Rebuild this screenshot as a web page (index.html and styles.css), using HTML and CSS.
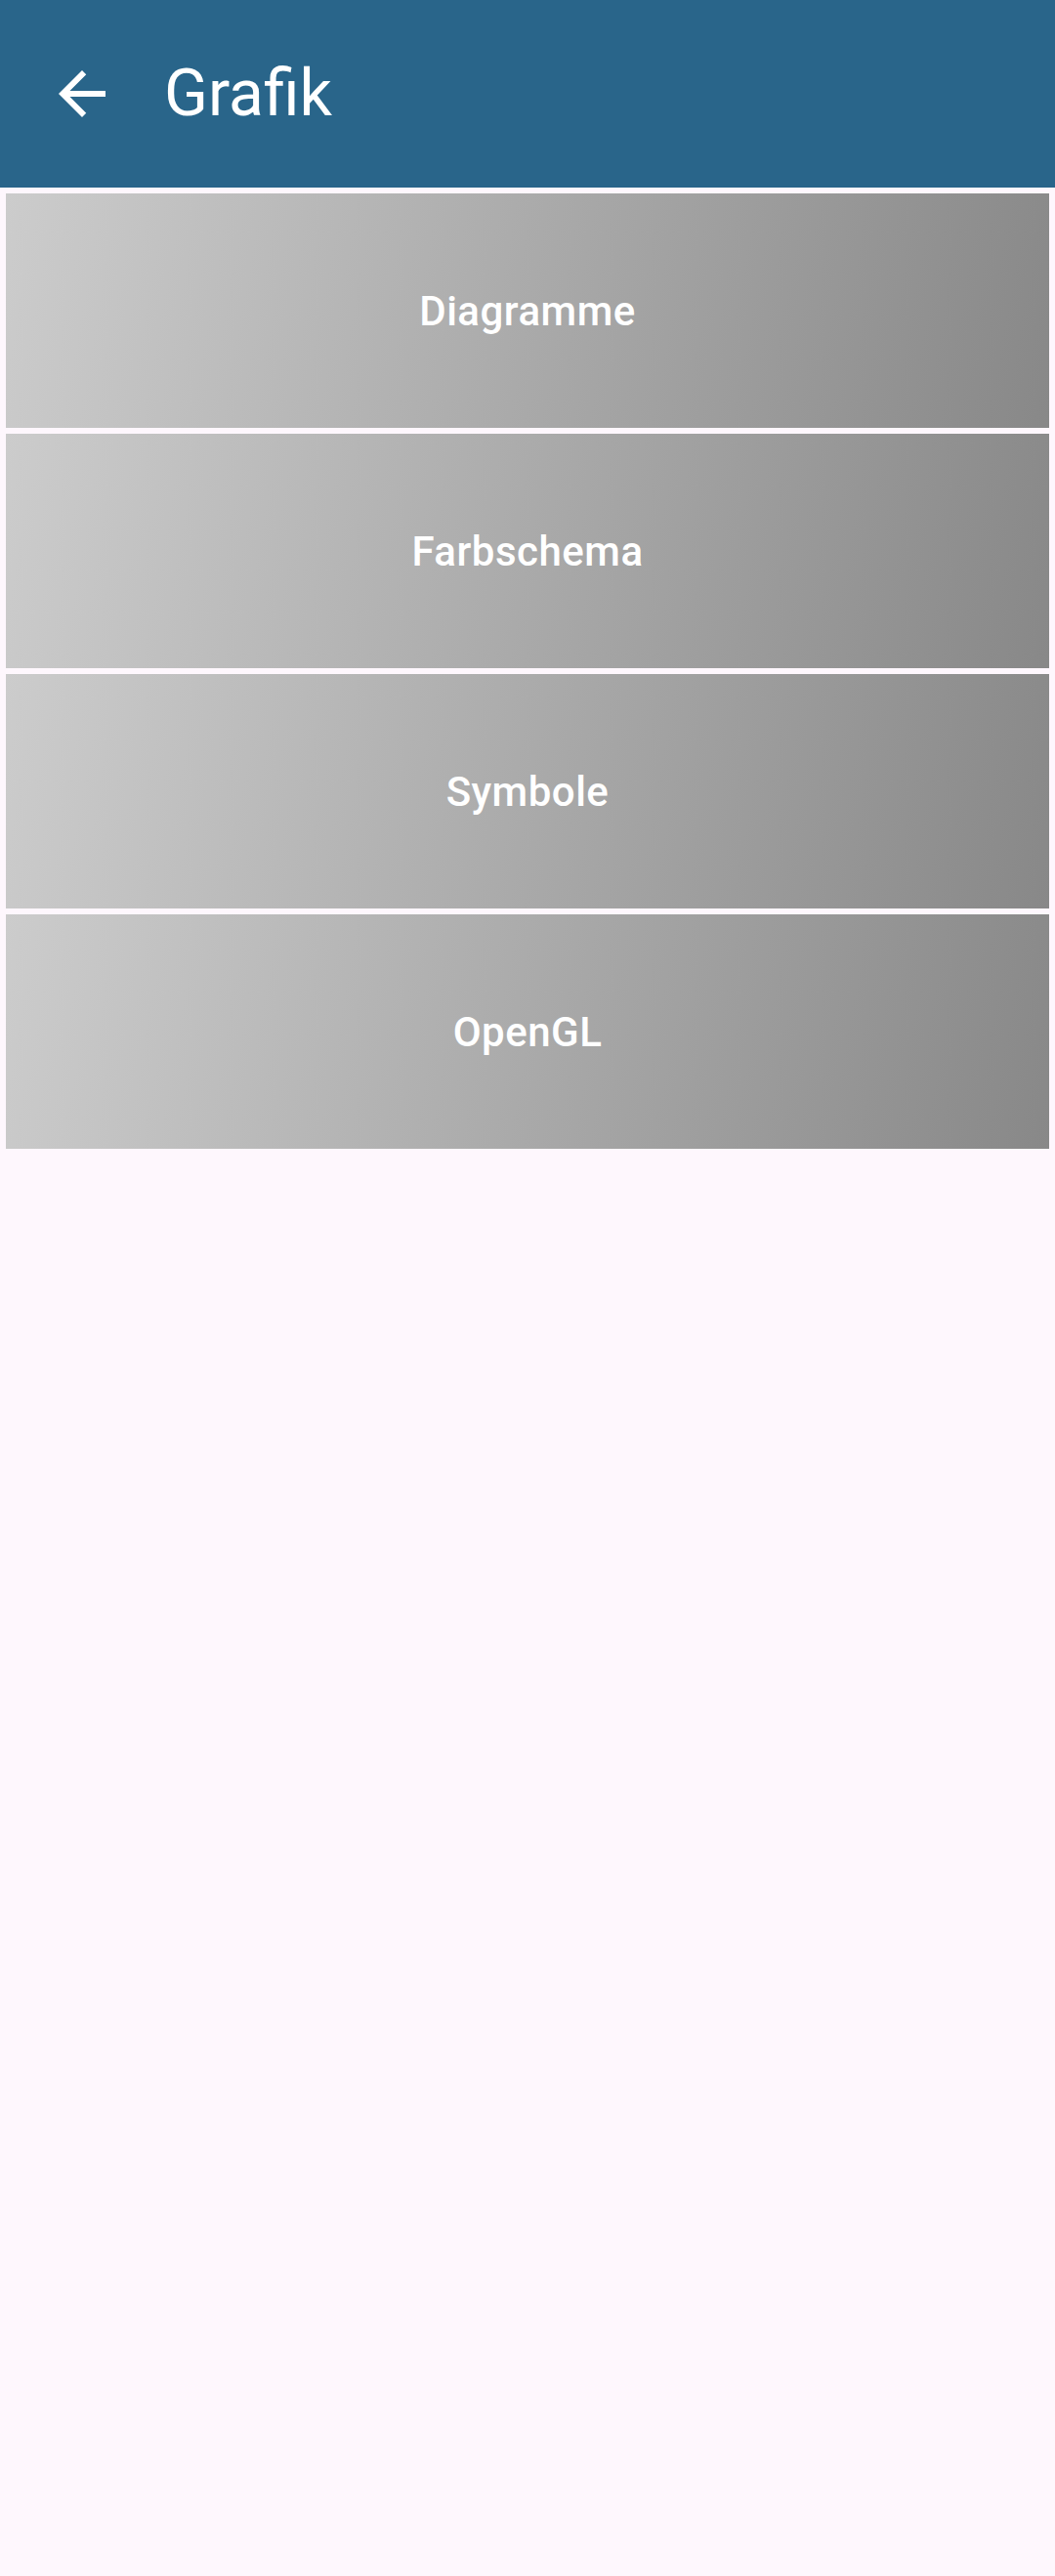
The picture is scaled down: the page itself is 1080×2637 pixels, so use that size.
FILE: index.html
```html
<!DOCTYPE html>
<html lang="de">
<head>
<meta charset="utf-8">
<title>Grafik</title>
<link rel="stylesheet" href="styles.css">
</head>
<body>
<header class="appbar">
  <button class="back" aria-label="Zurück">
    <svg viewBox="0 0 24 24" width="72" height="72"><path fill="#ffffff" d="M20 11H7.83l5.59-5.59L12 4l-8 8 8 8 1.41-1.41L7.83 13H20v-2z"/></svg>
  </button>
  <h1 class="title">Grafik</h1>
</header>
<main class="list">
  <div class="item">Diagramme</div>
  <div class="item">Farbschema</div>
  <div class="item">Symbole</div>
  <div class="item">OpenGL</div>
</main>
</body>
</html>
```
FILE: styles.css
```css
* { box-sizing: border-box; }
html, body {
  margin: 0;
  padding: 0;
  background: #fef7fd;
  font-family: Roboto, "Noto Sans", sans-serif;
}
.appbar {
  height: 192px;
  background: #29658a;
  display: flex;
  align-items: center;
  padding-left: 48px;
}
.back {
  width: 72px;
  height: 72px;
  padding: 0;
  border: 0;
  background: none;
  display: flex;
}
.title {
  margin: 0 0 0 48px;
  color: #ffffff;
  font-size: 66px;
  font-weight: 400;
  line-height: 1;
}
.list {
  display: flex;
  flex-direction: column;
  gap: 6px;
  padding: 6px 6px 0 6px;
}
.item {
  height: 240px;
  display: flex;
  align-items: center;
  justify-content: center;
  color: #ffffff;
  font-size: 42px;
  font-weight: 500;
  letter-spacing: 0.5px;
  background: linear-gradient(100deg, #cccccc 0%, #aaaaaa 50%, #888888 100%);
}
```
